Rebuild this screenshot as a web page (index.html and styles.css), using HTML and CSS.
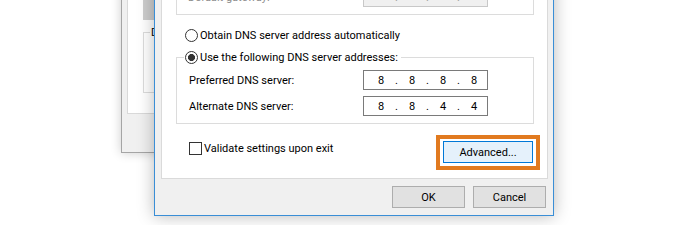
FILE: index.html
```html
<!DOCTYPE html>
<html>
<head>
<meta charset="utf-8">
<link rel="stylesheet" href="styles.css">
</head>
<body>
<div class="desk">
  <div class="backwin">
    <div class="bw-panel">
      <div class="bw-bar"></div>
      <fieldset class="bw-group"><legend class="bw-legend">DNS</legend></fieldset>
    </div>
  </div>

  <div class="dialog">
    <div class="panel">
      <div class="top-group">
        <div class="field-row">
          <span class="label label-off">Default gateway:</span>
          <div class="ip ip-off"><span class="f"></span><span class="d">.</span><span class="f"></span><span class="d">.</span><span class="f"></span><span class="d">.</span><span class="f"></span></div>
        </div>
      </div>

      <div class="radio-row"><span class="radio"></span><span>Obtain DNS server address automatically</span></div>

      <fieldset class="dns">
        <legend class="dns-legend"><span class="legend-inner"><span class="radio radio-on"></span><span>Use the following DNS server addresses:</span></span></legend>
        <div class="field-row dns-row first">
          <span class="label">Preferred DNS server:</span>
          <div class="ip"><span class="f">8</span><span class="d">.</span><span class="f">8</span><span class="d">.</span><span class="f">8</span><span class="d">.</span><span class="f">8</span></div>
        </div>
        <div class="field-row dns-row second">
          <span class="label">Alternate DNS server:</span>
          <div class="ip"><span class="f">8</span><span class="d">.</span><span class="f">8</span><span class="d">.</span><span class="f">4</span><span class="d">.</span><span class="f">4</span></div>
        </div>
      </fieldset>

      <div class="bottom-row">
        <div class="check-row"><span class="checkbox"></span><span>Validate settings upon exit</span></div>
        <div class="highlight"><div class="btn btn-adv">Advanced...</div></div>
      </div>
    </div>
    <div class="buttons">
      <div class="btn">OK</div>
      <div class="btn">Cancel</div>
    </div>
  </div>
</div>
</body>
</html>
```
FILE: styles.css
```css
* { box-sizing: border-box; }
html, body { margin: 0; padding: 0; }
body {
  width: 675px;
  height: 225px;
  overflow: hidden;
  background: #ffffff;
  font-family: Roboto, "Noto Sans", sans-serif;
  font-size: 11px;
  color: #000;
}
.desk { position: relative; width: 675px; height: 225px; overflow: hidden; }

/* background window */
.backwin {
  position: absolute;
  left: 121px;
  top: -40px;
  width: 200px;
  height: 193px;
  border: 1px solid #a5a5a5;
  background: #f0f0f0;
  box-shadow: 0 0 10px rgba(0, 0, 0, 0.2);
  padding-left: 5px;
}
.bw-panel {
  height: 153px;
  border: 1px solid #d9d9d9;
  background: #fff;
  padding-left: 15px;
  display: flow-root;
}
.bw-bar { width: 11px; height: 28px; margin-top: 30px; background: #cdcdcd; }
.bw-group {
  margin: 6px 0 0;
  padding: 0;
  height: 67px;
  border: 1px solid #dcdcdc;
  border-right: none;
}
.bw-legend { margin-left: 6px; padding: 0 1px; line-height: 13px; }

/* front dialog */
.dialog {
  position: absolute;
  left: 154px;
  top: -60px;
  width: 400px;
  height: 276px;
  border: 1px solid #3a8ed6;
  background: #f0f0f0;
  box-shadow: 0 0 16px rgba(0, 0, 0, 0.28);
  padding: 9px 5px 0 6px;
  display: flex;
  flex-direction: column;
  z-index: 2;
}
.panel {
  height: 229px;
  flex: none;
  border: 1px solid #dadada;
  background: #fff;
  padding: 9px 13px 0 14px;
}
.top-group {
  height: 55px;
  border: 1px solid #dcdcdc;
  display: flex;
  flex-direction: column;
  justify-content: flex-end;
  padding: 0 0 7px 11px;
}
.field-row { display: flex; align-items: center; height: 20px; }
.label { width: 175px; flex: none; }
.label-off { color: #8c8c8c; }
.dns-row .label { width: 174px; }

.ip {
  width: 125px;
  height: 20px;
  border: 1px solid #7a7a7a;
  background: #fff;
  display: flex;
  align-items: center;
  padding-left: 5px;
}
.ip .f { width: 24px; text-align: center; }
.ip .d { width: 7px; text-align: center; }
.ip-off { background: #f0f0f0; border-color: #c8c8c8; color: #a0a0a0; }

.radio-row {
  display: flex;
  align-items: center;
  gap: 2px;
  height: 13px;
  margin: 14px 0 0 9px;
}
.radio {
  width: 13px;
  height: 13px;
  flex: none;
  border: 1px solid #333;
  border-radius: 50%;
  background: #fff;
}
.radio-on { background: radial-gradient(circle, #333 0 3.2px, #fff 3.8px); }

.dns {
  margin: 8px 0 0;
  padding: 0 0 7px 0;
  border: 1px solid #dcdcdc;
  min-width: 0;
}
.dns-legend { margin-left: 7px; padding: 0 3px 0 1px; }
.legend-inner { display: flex; align-items: center; gap: 2px; height: 15px; }
.dns-row { margin-left: 12px; }
.dns-row.first { margin-top: 5px; }
.dns-row.second { margin-top: 6px; }

.bottom-row {
  display: flex;
  justify-content: space-between;
  align-items: flex-start;
  margin-top: 11px;
}
.check-row {
  display: flex;
  align-items: center;
  gap: 2px;
  height: 13px;
  margin: 7px 0 0 13px;
}
.checkbox { width: 13px; height: 13px; border: 1px solid #333; background: #fff; flex: none; }

.highlight {
  border: 4px solid #e17a1f;
  padding: 2px 3px 3px;
  margin-right: -6px;
}
.btn {
  width: 73px;
  height: 22px;
  border: 1px solid #adadad;
  background: #e1e1e1;
  display: flex;
  align-items: center;
  justify-content: center;
}
.btn-adv { width: 90px; background: #e5f1fb; border-color: #0078d7; }

.buttons {
  display: flex;
  justify-content: flex-end;
  gap: 8px;
  margin: 7px 2px 0 0;
}
```
